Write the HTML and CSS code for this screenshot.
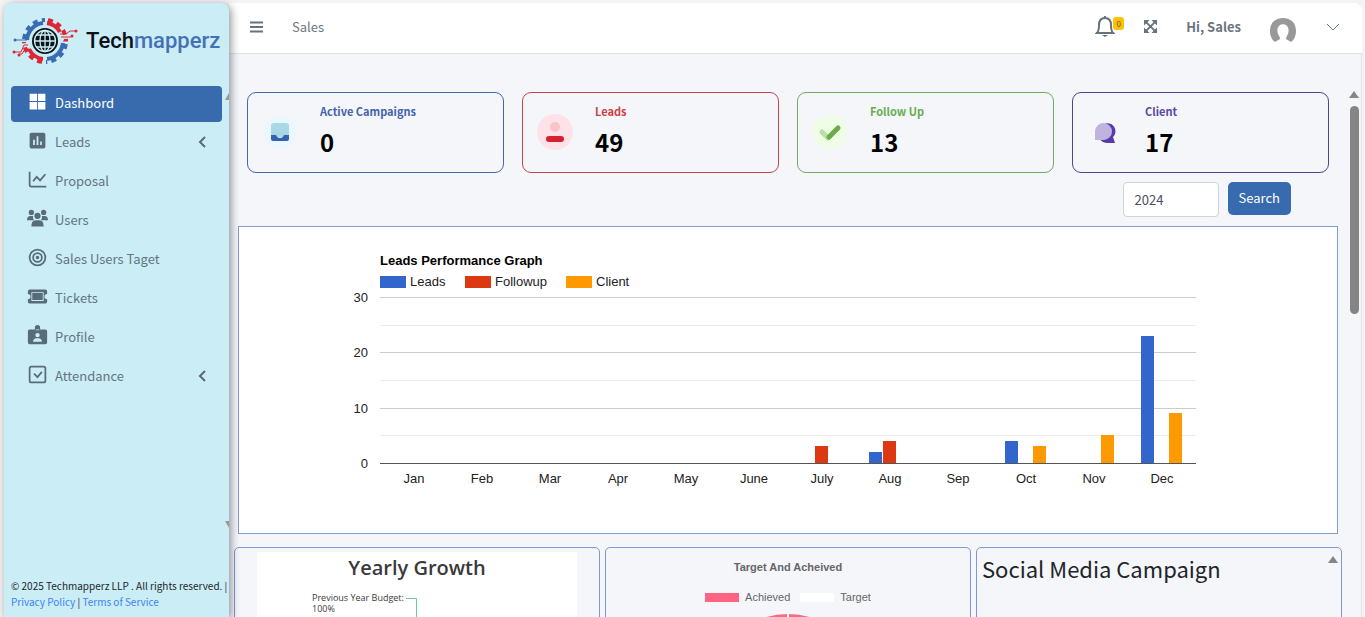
FILE: index.html
```html
<!DOCTYPE html>
<html lang="en">
<head>
    <meta charset="UTF-8">
    <meta name="viewport" content="width=device-width, initial-scale=1.0">
    <title>Techmapperz - Sales Dashboard</title>
    <link rel="stylesheet" href="styles.css">
</head>
<body>
    <div class="wrapper">
        <aside class="sidebar">
            <a href="#" class="brand">
                <svg class="brand-logo" viewBox="0 0 68 50" fill="none">
                    <!-- gear teeth, one quarter at a time -->
                    <g stroke-width="4" stroke-dasharray="5 4.2" stroke-dashoffset="-2">
                        <path d="M13 25A21 21 0 0 1 34 4" stroke="#3a6cb4"/>
                        <path d="M35 4A21 21 0 0 1 55 25" stroke="#dd2733"/>
                        <path d="M55 26A21 21 0 0 1 35 46" stroke="#3a6cb4"/>
                        <path d="M33 46A21 21 0 0 1 13 26" stroke="#dd2733"/>
                    </g>
                    <g stroke-width="4">
                        <path d="M16 24A18 18 0 0 1 32 7" stroke="#3a6cb4"/>
                        <path d="M36 7A18 18 0 0 1 49 16" stroke="#dd2733"/>
                        <path d="M52 27A18 18 0 0 1 36 43" stroke="#3a6cb4"/>
                        <path d="M32 43A18 18 0 0 1 18 33" stroke="#dd2733"/>
                    </g>
                    <path d="M49 18h6l4-3h6M50 21h10M52 25h5" stroke="#dd2733"/>
                    <path d="M16 24H4" stroke="#3a6cb4"/>
                    <path d="M17 29h-4l-3 7H3M18 33h-4l-3 5H8" stroke="#dd2733"/>
                    <g fill="#dd2733"><circle cx="65" cy="15" r="1.500"/><circle cx="61" cy="20" r="1.500"/><circle cx="3" cy="36" r="1.500"/><circle cx="8" cy="39" r="1.500"/></g>
                    <circle cx="4" cy="24" r="1.500" fill="#3a6cb4"/>
                    <circle cx="34" cy="25" r="13" fill="#0b1319"/>
                    <g stroke="#cbedf6" stroke-width="1.300">
                        <circle cx="34" cy="25" r="10.500"/>
                        <ellipse cx="34" cy="25" rx="5" ry="10.500"/>
                        <path d="M34 14v22M23 25h22M25 19h18M25 31h18"/>
                    </g>
                </svg>
                <span class="brand-name">Tech<span>mapperz</span></span>
            </a>

            <nav class="menu">
                <a href="#" class="menu-item active">
                    <svg viewBox="0 0 24 24"><path d="M3 3h8.500v8.500H3zM12.500 3H21v8.500h-8.500zM3 12.500h8.500V21H3zM12.500 12.500H21V21h-8.500z"/></svg>
                    Dashbord
                </a>
                <a href="#" class="menu-item">
                    <svg viewBox="0 0 24 24"><path fill-rule="evenodd" d="M5 3h14a2 2 0 0 1 2 2v14a2 2 0 0 1-2 2H5a2 2 0 0 1-2-2V5c0-1 1-2 2-2zm2 8v6h2v-6zm4-4v10h2V7zm4 6v4h2v-4z"/></svg>
                    Leads
                    <svg class="arrow" viewBox="0 0 12 12"><path d="M8 1L3 6l5 5"/></svg>
                </a>
                <a href="#" class="menu-item">
                    <svg viewBox="0 0 24 24" class="line"><path d="M3 3v15q0 2 2 2h17M7 14l4-5 4 4 6-7"/></svg>
                    Proposal
                </a>
                <a href="#" class="menu-item">
                    <svg viewBox="0 0 24 24"><circle cx="5" cy="5" r="3"/><circle cx="19" cy="5" r="3"/><circle cx="12" cy="9" r="3.500"/><path d="M0 14q0-5 4-5h3q-1 3 1 5zM24 14q0-5-4-5h-3q1 3-1 5zM5 21q0-7 5-7h4q5 0 5 7z"/></svg>
                    Users
                </a>
                <a href="#" class="menu-item">
                    <svg viewBox="0 0 24 24" class="line"><circle cx="12" cy="12" r="9"/><circle cx="12" cy="12" r="5"/><circle cx="12" cy="12" r="1"/></svg>
                    Sales Users Taget
                </a>
                <a href="#" class="menu-item">
                    <svg viewBox="0 0 24 24"><path fill-rule="evenodd" d="M3 4h18q2 0 2 2v3a3 3 0 0 0 0 6v3q0 2-2 2H3q-2 0-2-2v-3a3 3 0 0 0 0-6V6q0-2 2-2zm2 3v10h14V7zm1 1h12v8H6z"/></svg>
                    Tickets
                </a>
                <a href="#" class="menu-item">
                    <svg viewBox="0 0 24 24"><path fill-rule="evenodd" d="M9 5V3a3 3 0 0 1 6 0v2h6q2 0 2 2v13q0 2-2 2H3q-2 0-2-2V7q0-2 2-2zM12 9a2.500 2.500 0 1 0 .1 0zM7 19h10q0-4-4-4h-2q-4 0-4 4zM10 5h4v1h-4z"/></svg>
                    Profile
                </a>
                <a href="#" class="menu-item">
                    <svg viewBox="0 0 24 24" class="line"><rect x="3" y="3" width="18" height="18" rx="2"/><path d="M8 11l4 4 5-6"/></svg>
                    Attendance
                    <svg class="arrow" viewBox="0 0 12 12"><path d="M8 1L3 6l5 5"/></svg>
                </a>
                <span class="menu-scroll up"></span>
                <span class="menu-scroll down"></span>
            </nav>

            <footer class="copyright">
                © 2025 Techmapperz LLP . All rights reserved. |<br>
                <a href="#">Privacy Policy</a> | <a href="#">Terms of Service</a>
            </footer>
        </aside>

        <div class="main">
            <header class="topbar">
                <button class="icon-btn" aria-label="Toggle menu">
                    <svg width="13" height="12" viewBox="0 0 13 12"><path d="M0 1.500h13M0 6h13M0 10.500h13"/></svg>
                </button>
                <span class="page-title">Sales</span>
                <button class="icon-btn bell" aria-label="Notifications">
                    <svg width="20" height="24" viewBox="0 0 20 24"><path d="M10 1v2M2 18c2-2 2-4 2-8 0-4 2-7 6-7s6 3 6 7c0 4 0 6 2 8zM1 18h18"/><path class="clapper" d="M7 20h6l-3 2z"/></svg>
                    <span class="badge">0</span>
                </button>
                <button class="icon-btn" aria-label="Full screen">
                    <svg class="expand" width="13" height="13" viewBox="0 0 14 14"><path d="M2 2l10 10M12 2L2 12"/><path class="corner" d="M0 0h6L0 6zM14 0v6L8 0zM0 14V8l6 6zM14 14H8l6-6z"/></svg>
                </button>
                <span class="greeting">Hi, Sales</span>
                <svg class="avatar" viewBox="0 0 26 26"><path d="M5 24C-2 19-1 7 4 3c5-4 13-4 18 0 5 4 6 16-1 21l-5-3c0-2 1-3 2-5 4-13-14-13-10 0 1 2 2 3 2 5z"/></svg>
                <button class="icon-btn thin" aria-label="Account menu">
                    <svg width="14" height="8" viewBox="0 0 14 8"><path d="M1 1l6 6 6-6"/></svg>
                </button>
            </header>

            <div class="page">
                <main class="content">
                    <section class="stats">
                        <div class="stat blue">
                            <svg class="stat-icon" viewBox="0 0 36 36"><circle cx="18" cy="18" r="16" fill="#e9f8fd"/><path d="M9 12q0-3 3-3h12q3 0 3 3v11H9z" fill="#abd8e6"/><path d="M9 21h5q1 3 4 3t4-3h5v4q0 2-2 2H11q-2 0-2-2z" fill="#3563ac"/></svg>
                            <div><h2>Active Campaigns</h2><p>0</p></div>
                        </div>
                        <div class="stat red">
                            <svg class="stat-icon" viewBox="0 0 36 36"><circle cx="18" cy="18" r="18" fill="#fde3e7"/><circle cx="18" cy="13" r="5" fill="#f9c3c9"/><rect x="9" y="22" width="18" height="6" rx="3" fill="#da202e"/></svg>
                            <div><h2>Leads</h2><p>49</p></div>
                        </div>
                        <div class="stat green">
                            <svg class="stat-icon" viewBox="0 0 36 36" fill="none" stroke-width="5" stroke-linecap="round"><circle cx="18" cy="18" r="17" fill="#f0fde6"/><path d="M10 18l6 6" stroke="#b8dfa8"/><path d="M17 23l9-9" stroke="#69ac49"/></svg>
                            <div><h2>Follow Up</h2><p>13</p></div>
                        </div>
                        <div class="stat purple">
                            <svg class="stat-icon" viewBox="0 0 36 36"><path d="M13 20a8 8 0 1 1 13 3l2 6h-7q-6 0-8-4z" fill="#563ba9"/><path d="M8 26V17a8.500 8.500 0 1 1 8.500 9z" fill="#beb4df"/></svg>
                            <div><h2>Client</h2><p>17</p></div>
                        </div>
                    </section>

                    <form class="filter">
                        <input type="text" name="year" value="2024" aria-label="Year">
                        <button type="button">Search</button>
                    </form>

                    <section class="performance">
                        <svg id="leadsChart" viewBox="0 0 1098 306" role="img" aria-label="Leads Performance Graph"></svg>
                    </section>

                    <section class="panels">
                        <div class="panel growth">
                            <div class="growth-chart">
                                <h2>Yearly Growth</h2>
                                <div class="funnel">
                                    <span>Previous Year Budget:<br>100%</span>
                                    <svg width="14" height="60" viewBox="0 0 14 60"><path d="M2 6.500h10.500V60"/></svg>
                                </div>
                            </div>
                        </div>
                        <div class="panel target">
                            <h2>Target And Acheived</h2>
                            <div class="target-legend">
                                <span class="swatch achieved"></span>Achieved
                                <span class="swatch goal"></span>Target
                            </div>
                            <svg class="doughnut" width="150" height="150" viewBox="0 0 150 150"><circle cx="75" cy="75" r="55"/><path d="M75 0v40"/></svg>
                        </div>
                        <div class="panel social">
                            <h2>Social Media Campaign</h2>
                            <span class="scroll-up"></span>
                        </div>
                    </section>
                </main>
                <div class="scrollbar">
                    <span class="scroll-up"></span>
                    <span class="thumb"></span>
                </div>
            </div>
        </div>
    </div>

    <script>
        const months = ['Jan', 'Feb', 'Mar', 'Apr', 'May', 'June', 'July', 'Aug', 'Sep', 'Oct', 'Nov', 'Dec'];
        const series = [
            { name: 'Leads', color: '#3366cc', legendX: 141, data: [0, 0, 0, 0, 0, 0, 0, 2, 0, 4, 0, 23] },
            { name: 'Followup', color: '#dc3912', legendX: 226, data: [0, 0, 0, 0, 0, 0, 3, 4, 0, 0, 0, 0] },
            { name: 'Client', color: '#ff9900', legendX: 327, data: [0, 0, 0, 0, 0, 0, 0, 0, 0, 3, 5, 9] }
        ];
        const left = 141, right = 957, base = 236, top30 = 70;
        const unit = (base - top30) / 30;
        const step = (right - left) / months.length;

        let svg = `<text class="chart-title" x="${left}" y="38">Leads Performance Graph</text>`;

        // Legend
        series.forEach(s => {
            svg += `<rect x="${s.legendX}" y="49" width="26" height="12" fill="${s.color}"/>`;
            svg += `<text x="${s.legendX + 30}" y="59">${s.name}</text>`;
        });

        // Grid lines, labels on every second one
        for (let v = 0; v <= 30; v += 5) {
            const y = Math.round(base - v * unit);
            const color = v % 10 === 0 ? '#ccc' : '#ebebeb';
            if (v > 0) svg += `<rect x="${left}" y="${y}" width="${right - left}" height="1" fill="${color}"/>`;
            if (v % 10 === 0) svg += `<text x="129" y="${y + 5}" text-anchor="end">${v}</text>`;
        }
        svg += `<rect x="${left}" y="${base}" width="${right - left}" height="1" fill="#555"/>`;

        // Bars
        months.forEach((month, i) => {
            const center = left + step * (i + 0.5);
            series.forEach((s, j) => {
                const h = Math.round(s.data[i] * unit);
                const x = Math.round(center - 21 + j * 14);
                svg += `<rect x="${x}" y="${base - h}" width="13" height="${h}" fill="${s.color}"/>`;
            });
            svg += `<text x="${center}" y="256" text-anchor="middle">${month}</text>`;
        });
        document.getElementById('leadsChart').innerHTML = svg;
    </script>
</body>
</html>
```
FILE: styles.css
```css
* {
    box-sizing: border-box;
}
body {
    margin: 0;
    background: #f5f4f5;
    color: #212529;
    font-family: "Source Sans Pro", "Noto Sans CJK SC", sans-serif;
    font-size: 13px;
    line-height: 20px;
}
h2, p {
    margin: 0;
}
a {
    text-decoration: none;
}
button, input {
    font: inherit;
}
.wrapper {
    display: flex;
    height: 100vh;
    padding: 3px 3px 0 4px;
    overflow: hidden;
}

/* Sidebar */
.sidebar {
    display: flex;
    flex-direction: column;
    flex: 0 0 225px;
    background: #cbedf6;
    border-radius: 8px 8px 0 0;
    box-shadow: 2px 2px 8px rgba(40, 40, 50, 0.5);
    z-index: 1;
}
.brand {
    display: flex;
    align-items: center;
    gap: 7px;
    height: 76px;
    padding: 0 0 0 7px;
    color: #0b1319;
}
.brand-logo {
    width: 68px;
    height: 50px;
}
.brand-name {
    font: 500 22px/28px Roboto, sans-serif;
}
.brand-name span {
    color: #4471b5;
}
.menu {
    position: relative;
    display: flex;
    flex-direction: column;
    flex: 1;
    gap: 3px;
    padding: 7px 7px 0;
}
.menu-item {
    display: flex;
    align-items: center;
    gap: 7px;
    height: 36px;
    padding: 0 13px 2px 16px;
    border-radius: 4px;
    color: #64757f;
}
.menu-item svg {
    width: 21px;
    height: 21px;
    margin-bottom: 3px;
    fill: #586b79;
}
.menu-item .line {
    fill: none;
    stroke: #586b79;
    stroke-width: 2;
}
.menu-item .arrow {
    width: 12px;
    height: 12px;
    margin: 0 0 0 auto;
    fill: none;
    stroke: #586b79;
    stroke-width: 2;
}
.menu-item.active {
    background: #386bae;
    color: #fff;
}
.menu-item.active svg {
    fill: #fff;
}
.menu-scroll {
    position: absolute;
    right: 0;
    border: 4px solid transparent;
    border-right-width: 0;
}
.menu-scroll.up {
    top: 10px;
    border-bottom: 7px solid #999;
}
.menu-scroll.down {
    bottom: 46px;
    border-top: 7px solid #999;
}
.copyright {
    padding: 0 0 7px 7px;
    font-size: 10px;
    line-height: 16px;
    white-space: nowrap;
}
.copyright a {
    color: #3b82f6;
}

/* Top bar */
.main {
    display: flex;
    flex-direction: column;
    flex: 1;
    min-width: 0;
}
.topbar {
    display: flex;
    align-items: center;
    height: 51px;
    padding: 0 22px 3px 21px;
    background: #fff;
    border-bottom: 1px solid #dee2e6;
    border-radius: 0 8px 0 0;
    color: #6c757d;
}
.icon-btn {
    display: flex;
    padding: 0;
    border: 0;
    background: none;
    cursor: pointer;
}
.icon-btn svg {
    fill: none;
    stroke: #66727c;
    stroke-width: 2;
}
.icon-btn.thin svg {
    stroke-width: 1;
}
.icon-btn .clapper, .icon-btn .corner {
    fill: #66727c;
    stroke: none;
}
.page-title {
    margin: 0 auto 0 29px;
}
.bell {
    position: relative;
    margin-right: 29px;
}
.badge {
    position: absolute;
    top: 2px;
    left: 18px;
    width: 11px;
    border-radius: 3px;
    background: #ffc107;
    color: #6b5a20;
    font-size: 8px;
    line-height: 13px;
}
.greeting {
    margin: 0 29px;
    font-weight: bold;
}
.avatar {
    width: 26px;
    height: 26px;
    margin: 8px 30px 0 0;
    fill: #999;
}

/* Page content */
.page {
    display: flex;
    flex: 1;
    min-height: 0;
    background: #f4f6fa;
}
.content {
    flex: 1;
    min-width: 0;
    padding-top: 38px;
    overflow: hidden;
}
.stats {
    display: grid;
    grid-template-columns: repeat(4, 1fr);
    gap: 18px;
    padding: 0 18px;
}
.stat {
    display: flex;
    gap: 22px;
    height: 81px;
    padding: 9px 14px;
    border: 1px solid;
    border-radius: 9px;
}
.stat-icon {
    width: 36px;
    height: 36px;
    margin-top: 12px;
}
.stat h2 {
    font-size: 11px;
    line-height: 19px;
}
.stat p {
    color: #000;
    font-size: 24px;
    font-weight: bold;
    line-height: 42px;
}
.blue {
    border-color: #4369a5;
    color: #4463ad;
}
.red {
    border-color: #c34550;
    color: #cf3d46;
}
.green {
    border-color: #72ab5c;
    color: #68ad51;
}
.purple {
    border-color: #4c4592;
    color: #5b48a4;
}
.filter {
    display: flex;
    justify-content: flex-end;
    align-items: flex-start;
    gap: 9px;
    padding: 9px 56px 9px 0;
}
.filter input {
    width: 96px;
    height: 35px;
    padding: 0 11px;
    border: 1px solid #ced4da;
    border-radius: 4px;
    background: #fff;
    color: #495057;
}
.filter button {
    height: 33px;
    padding: 0 11px 2px;
    border: 0;
    border-radius: 5px;
    background: #386bae;
    color: #fff;
}
.performance {
    margin: 0 9px 13px;
    border: 1px solid #7f9fd0;
    background: #fff;
}
.performance svg {
    display: block;
    width: 100%;
    font: 13px "Liberation Sans", Arial, sans-serif;
    fill: #222;
}
.performance .chart-title {
    font-weight: bold;
    fill: #000;
}

/* Bottom panels */
.panels {
    display: grid;
    grid-template-columns: repeat(3, 1fr);
    gap: 5px;
    padding: 0 5px;
}
.panel {
    height: 240px;
    border: 1px solid #8198d4;
    border-radius: 5px;
}
.growth {
    padding: 4px 22px;
}
.growth-chart {
    height: 100%;
    background: #fff;
    color: #3a3a3a;
    font-family: "Trebuchet MS", "Open Sans", sans-serif;
    text-align: center;
}
.growth-chart h2 {
    font-size: 20px;
    font-weight: 600;
    line-height: 32px;
}
.funnel {
    display: flex;
    padding: 8px 0 0 55px;
    font-size: 9px;
    line-height: 11px;
    text-align: left;
}
.funnel path {
    fill: none;
    stroke: #6cc9a3;
}
.target {
    display: flex;
    flex-direction: column;
    align-items: center;
    padding: 10px;
    color: #666;
    font: 11px/18px "Liberation Sans", Arial, sans-serif;
    overflow: hidden;
}
.target h2 {
    font-size: 11px;
    line-height: 18px;
}
.target-legend {
    display: flex;
    align-items: center;
    gap: 6px;
    margin: 12px 0 8px;
}
.swatch {
    width: 34px;
    height: 9px;
}
.achieved {
    background: #ff6384;
}
.goal {
    margin-left: 4px;
    background: #fff;
}
.doughnut {
    flex: none;
}
.doughnut circle {
    fill: none;
    stroke: #f56b84;
    stroke-width: 40;
}
.doughnut path {
    stroke: #fff;
    stroke-width: 2;
}
.social {
    display: flex;
    justify-content: space-between;
    padding: 0 3px 0 5px;
}
.social h2 {
    font-size: 22px;
    font-weight: normal;
    line-height: 40px;
}

/* Scrollbars */
.scrollbar {
    display: flex;
    flex-direction: column;
    align-items: center;
    gap: 8px;
    width: 15px;
    padding-top: 29px;
    border-right: 1px solid #dfe2e8;
}
.scroll-up {
    margin-top: 8px;
    width: 10px;
    height: 7px;
    background: #858585;
    clip-path: polygon(50% 0, 100% 100%, 0 100%);
}
.thumb {
    width: 9px;
    height: 208px;
    border-radius: 5px;
    background: #858585;
}
```
